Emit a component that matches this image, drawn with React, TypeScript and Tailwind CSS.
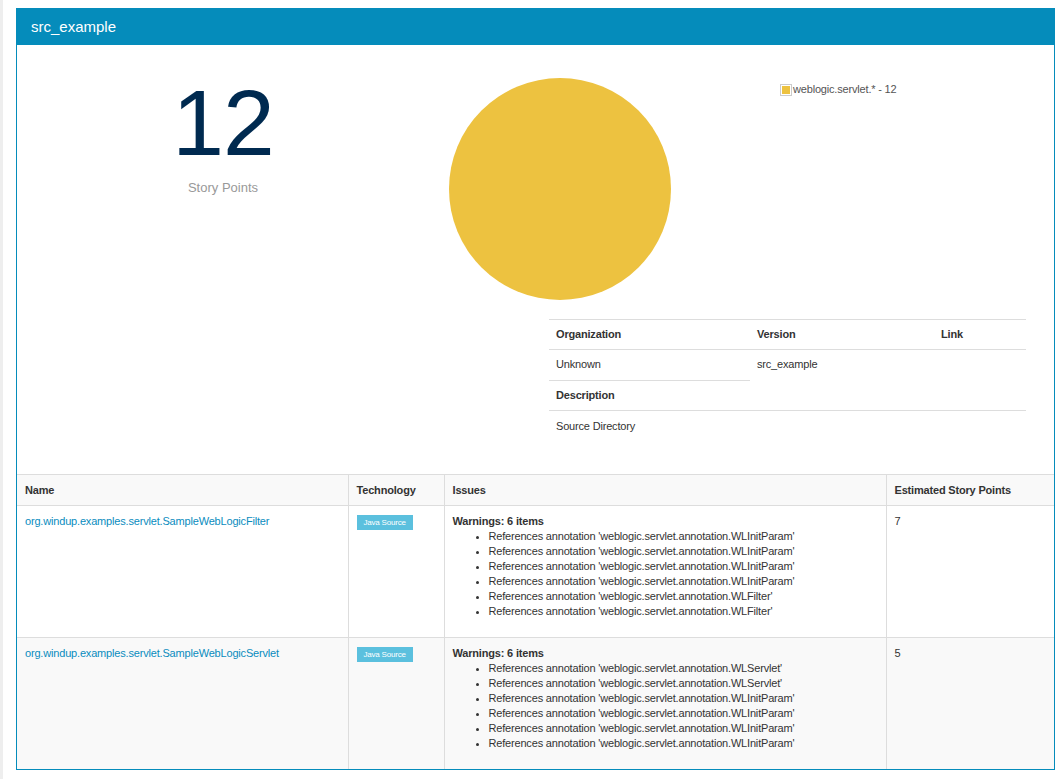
import React from "react";

const items1 = [
  "References annotation 'weblogic.servlet.annotation.WLInitParam'",
  "References annotation 'weblogic.servlet.annotation.WLInitParam'",
  "References annotation 'weblogic.servlet.annotation.WLInitParam'",
  "References annotation 'weblogic.servlet.annotation.WLInitParam'",
  "References annotation 'weblogic.servlet.annotation.WLFilter'",
  "References annotation 'weblogic.servlet.annotation.WLFilter'",
];
const items2 = [
  "References annotation 'weblogic.servlet.annotation.WLServlet'",
  "References annotation 'weblogic.servlet.annotation.WLServlet'",
  "References annotation 'weblogic.servlet.annotation.WLInitParam'",
  "References annotation 'weblogic.servlet.annotation.WLInitParam'",
  "References annotation 'weblogic.servlet.annotation.WLInitParam'",
  "References annotation 'weblogic.servlet.annotation.WLInitParam'",
];

function Row({ name, items, points, striped }: { name: string; items: string[]; points: string; striped?: boolean }) {
  return (
    <tr className={striped ? "bg-[#f9f9f9]" : "bg-white"}>
      <td className="align-top px-2 pt-2 pb-2 border-t border-[#dddddd]">
        <a className="text-[#0a8cbe]">{name}</a>
      </td>
      <td className="align-top px-2 pt-2 pb-2 border-t border-l border-[#dddddd]">
        <span className="inline-block bg-[#5bc0de] text-white text-[8px] leading-[15px] h-[15px] px-[7px] mt-[1px] align-top tracking-[-0.2px]">Java Source</span>
      </td>
      <td className="align-top px-2 pt-2 pb-2 border-t border-l border-[#dddddd]">
        <div className="font-bold">Warnings: 6 items</div>
        <ul className="pl-[36px] mb-[10px]">
          {items.map((t, i) => (
            <li key={i} className="list-disc">{t}</li>
          ))}
        </ul>
      </td>
      <td className="align-top px-2 pt-2 pb-2 border-t border-l border-[#dddddd] text-[#333333]">{points}</td>
    </tr>
  );
}

export default function App() {
  return (
    <div className="relative min-h-[779px] bg-white text-[11px] leading-[15px] tracking-[-0.18px] text-[#333333]" style={{ fontFamily: '"Liberation Sans", Arial, sans-serif' }}>
      <div className="absolute left-0 top-0 w-[3px] h-[779px] bg-[#eeeeee]" />
      <div className="pt-[8px] pl-[16px] w-[1055px]">
        <div className="border border-[#058cbb]">
          <div className="bg-[#058cbb] h-[36px] pl-[14px] text-white text-[15px] leading-[36px] tracking-normal">src_example</div>
          <div className="flex h-[429px]">
            <div className="w-[412px] flex flex-col items-center pt-[26px] tracking-normal">
              <div className="text-[93px] leading-[104px] text-[#002a50] tracking-[-1px]">12</div>
              <div className="text-[13px] leading-[15px] text-[#999999] mt-[5px]">Story Points</div>
            </div>
            <div className="flex-1 flex flex-col">
              <div className="h-[274px] flex">
                <svg width="242" height="274" className="ml-[20px] shrink-0">
                  <circle cx="111" cy="144" r="111" fill="#edc240" />
                </svg>
                <div className="flex items-start mt-[39px] ml-[89px] text-[11px] leading-[11px] text-[#545454]">
                  <div className="border border-[#cccccc] p-[1px] mr-[1px]">
                    <div className="w-[8px] h-[8px] bg-[#edc240]" />
                  </div>
                  <span>weblogic.servlet.* - 12</span>
                </div>
              </div>
              <table className="ml-[120px] w-[477px] table-fixed border-collapse">
                <colgroup>
                  <col className="w-[201px]" />
                  <col className="w-[184px]" />
                  <col className="w-[92px]" />
                </colgroup>
                <tbody>
                  <tr>
                    <th className="text-left font-bold px-[7px] py-[7px] border-t border-[#dddddd]">Organization</th>
                    <th className="text-left font-bold px-[7px] py-[7px] border-t border-[#dddddd]">Version</th>
                    <th className="text-left font-bold px-[7px] py-[7px] border-t border-[#dddddd]">Link</th>
                  </tr>
                  <tr>
                    <td className="px-[7px] pt-[7px] pb-[8px] border-t border-[#dddddd] align-top">Unknown</td>
                    <td rowSpan={2} className="px-[7px] py-[7px] border-t border-[#dddddd] align-top">src_example</td>
                    <td rowSpan={2} className="px-[7px] py-[7px] border-t border-[#dddddd] align-top"></td>
                  </tr>
                  <tr>
                    <th className="text-left font-bold px-[7px] pt-[7px] pb-[7px] border-t border-[#dddddd]">Description</th>
                  </tr>
                  <tr>
                    <td colSpan={3} className="px-[7px] py-[8px] border-t border-[#dddddd]">Source Directory</td>
                  </tr>
                </tbody>
              </table>
            </div>
          </div>
          <table className="w-full table-fixed border-collapse">
            <colgroup>
              <col className="w-[331px]" />
              <col className="w-[96px]" />
              <col className="w-[442px]" />
              <col />
            </colgroup>
            <thead>
              <tr className="bg-[#f9f9f9]">
                <th className="text-left font-bold px-2 pt-2 pb-[7px] border-t border-[#dddddd]">Name</th>
                <th className="text-left font-bold px-2 pt-2 pb-[7px] border-t border-l border-[#dddddd]">Technology</th>
                <th className="text-left font-bold px-2 pt-2 pb-[7px] border-t border-l border-[#dddddd]">Issues</th>
                <th className="text-left font-bold px-2 pt-2 pb-[7px] border-t border-l border-[#dddddd]">Estimated Story Points</th>
              </tr>
            </thead>
            <tbody>
              <Row name="org.windup.examples.servlet.SampleWebLogicFilter" items={items1} points="7" />
              <Row name="org.windup.examples.servlet.SampleWebLogicServlet" items={items2} points="5" striped />
            </tbody>
          </table>
        </div>
      </div>
    </div>
  );
}
